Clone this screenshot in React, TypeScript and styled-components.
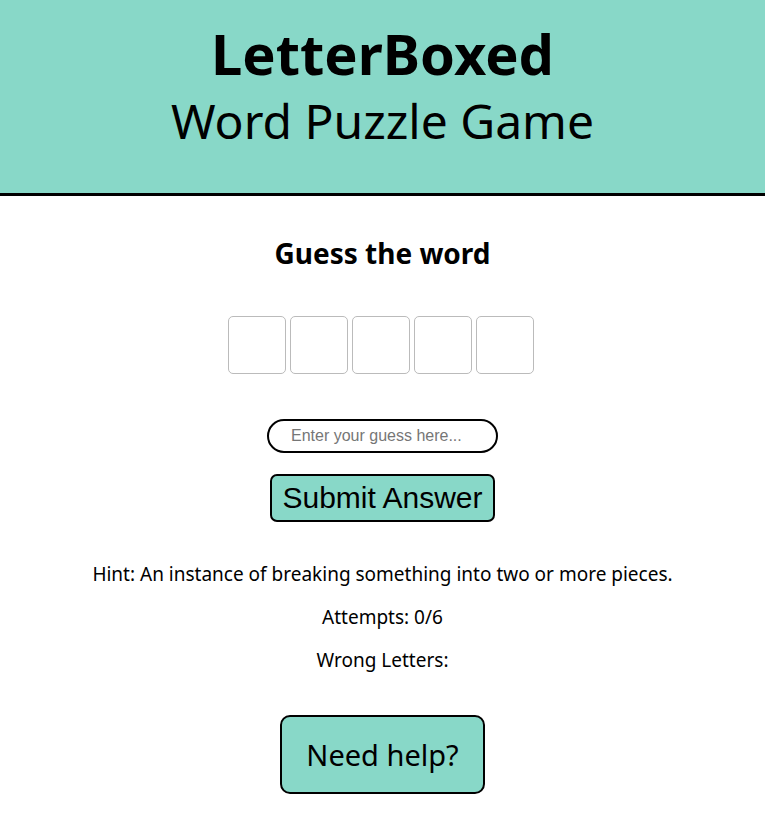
import React from "react";
import styled, { createGlobalStyle } from "styled-components";

const GlobalStyle = createGlobalStyle`
  html, body {
    margin: 0;
    padding: 0;
    background: #ffffff;
  }
  body {
    font-family: "Noto Sans", Lato, sans-serif;
    color: #000000;
  }
`;

const TEAL = "#88d8c8";

const Header = styled.header`
  background: ${TEAL};
  border-bottom: 3px solid #000;
  padding: 25px 0 0;
  height: 196px;
  box-sizing: border-box;
  display: flex;
  flex-direction: column;
  align-items: center;
`;

const Title = styled.h1`
  margin: 0;
  font-size: 56px;
  line-height: 1;
  font-weight: 700;
`;

const Subtitle = styled.p`
  margin: 16px 0 0;
  font-size: 48px;
  line-height: 1;
  font-weight: 400;
`;

const Main = styled.main`
  display: flex;
  flex-direction: column;
  align-items: center;
  padding-top: 43px;
  padding-bottom: 30px;
`;

const Heading = styled.h2`
  margin: 0;
  font-size: 28px;
  line-height: 1;
  font-weight: 700;
`;

const Boxes = styled.div`
  display: flex;
  gap: 4px;
  margin-top: 49px;
  padding-right: 3px;
`;

const LetterBox = styled.div`
  width: 58px;
  height: 58px;
  box-sizing: border-box;
  border: 1px solid #bbbbbb;
  border-radius: 5px;
`;

const GuessInput = styled.input`
  margin-top: 45px;
  width: 231px;
  height: 34px;
  box-sizing: border-box;
  border: 2px solid #000;
  border-radius: 17px;
  padding: 0 22px;
  font-family: "Liberation Sans", Arial, sans-serif;
  font-size: 16px;
  outline: none;
  &::placeholder {
    color: #767676;
  }
`;

const SubmitButton = styled.button`
  margin-top: 21px;
  background: ${TEAL};
  border: 2px solid #000;
  border-radius: 7px;
  padding: 5px 10px;
  font-family: "Liberation Sans", Arial, sans-serif;
  font-size: 30px;
  line-height: 34px;
  color: #000;
  cursor: pointer;
`;

const Info = styled.p<{ $first?: boolean }>`
  margin: ${(p) => (p.$first ? "42px" : "23px")} 0 0;
  font-size: 19px;
  line-height: 20px;
`;

const HelpButton = styled.button`
  margin-top: 45px;
  background: ${TEAL};
  border: 2px solid #000;
  border-radius: 10px;
  padding: 23px 24px;
  font-family: "Noto Sans", Lato, sans-serif;
  font-size: 29px;
  line-height: 29px;
  color: #000;
  cursor: pointer;
`;

export default function App() {
  return (
    <>
      <GlobalStyle />
      <Header>
        <Title>LetterBoxed</Title>
        <Subtitle>Word Puzzle Game</Subtitle>
      </Header>
      <Main>
        <Heading>Guess the word</Heading>
        <Boxes>
          {[0, 1, 2, 3, 4].map((i) => (
            <LetterBox key={i} />
          ))}
        </Boxes>
        <GuessInput type="text" placeholder="Enter your guess here..." />
        <SubmitButton>Submit Answer</SubmitButton>
        <Info $first>Hint: An instance of breaking something into two or more pieces.</Info>
        <Info>Attempts: 0/6</Info>
        <Info>Wrong Letters:</Info>
        <HelpButton>Need help?</HelpButton>
      </Main>
    </>
  );
}
